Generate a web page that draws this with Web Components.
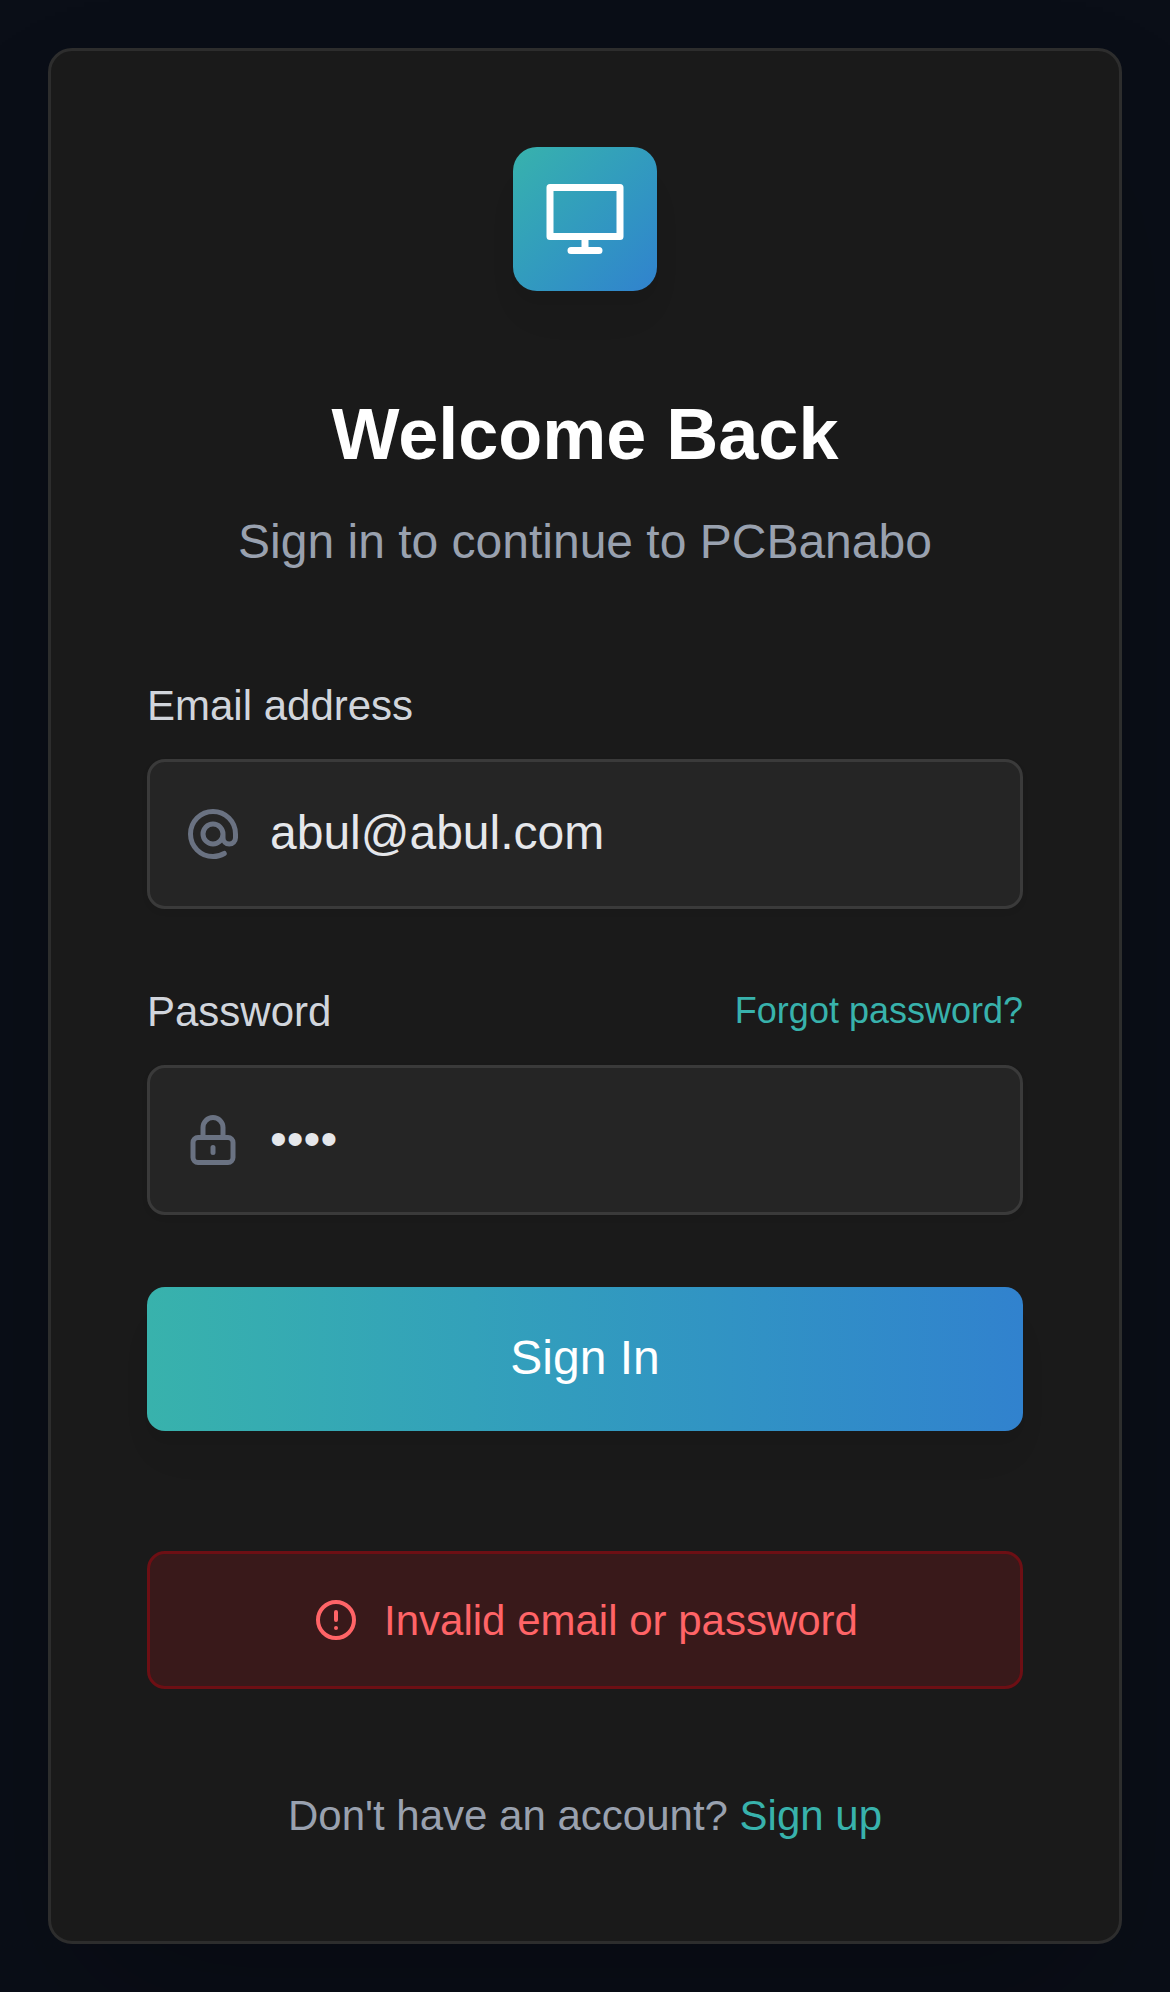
<!DOCTYPE html>
<html lang="en">
<head>
<meta charset="utf-8">
<title>PCBanabo – Sign in</title>
<style>
html, body { margin: 0; height: 100%; }
body { background: #0a0e17; font-family: "Liberation Sans", Arial, sans-serif; overflow: hidden; }
</style>
</head>
<body>
<login-page></login-page>
<script>
const define = (name, html) => customElements.define(name, class extends HTMLElement {
  constructor() {
    super();
    this.attachShadow({ mode: "open" }).innerHTML = html;
  }
});

const ICONS = {
  monitor: '<path d="M2 3h20v14H2zM12 17v4M8 21h8"/>',
  at: '<path d="M16 12a4 4 0 10-8 0 4 4 0 008 0zm0 0v1.5a2.5 2.5 0 005 0V12a9 9 0 10-9 9m4.5-1.206a8.959 8.959 0 01-4.5 1.207"/>',
  lock: '<path d="M12 15v2m-6 4h12a2 2 0 002-2v-6a2 2 0 00-2-2H6a2 2 0 00-2 2v6a2 2 0 002 2zm10-10V7a4 4 0 00-8 0v4h8z"/>',
  alert: '<path d="M12 8v4m0 4h.01M21 12a9 9 0 11-18 0 9 9 0 0118 0z"/>'
};

customElements.define("ui-icon", class extends HTMLElement {
  constructor() {
    super();
    this.attachShadow({ mode: "open" });
  }
  connectedCallback() {
    this.shadowRoot.innerHTML = `
      <style>
        :host { display: block; flex: none; width: 60px; height: 60px; }
        svg { display: block; width: 100%; height: 100%; }
      </style>
      <svg viewBox="0 0 24 24" fill="none" stroke="currentColor" stroke-width="2"
           stroke-linecap="round" stroke-linejoin="round">${ICONS[this.getAttribute("name")]}</svg>`;
  }
});

define("brand-mark", `
  <style>
    :host { display: flex; align-items: center; justify-content: center; width: 144px; height: 144px;
      border-radius: 24px; color: #fff; background: linear-gradient(to bottom right in oklab, #38b2ac, #3182ce);
      box-shadow: 0 30px 45px -9px rgba(0,0,0,.04), 0 12px 18px -12px rgba(0,0,0,.08); }
    ui-icon { width: 84px; height: 84px; }
  </style>
  <ui-icon name="monitor"></ui-icon>`);

define("form-field", `
  <style>
    :host { display: block; }
    .head { display: flex; justify-content: space-between; height: 60px; line-height: 62px;
      font-size: 42px; color: #d1d5dc; margin-bottom: 24px; }
    ::slotted([slot="action"]) { font-size: 36px; line-height: 59px; color: #38b2ac; text-decoration: none; }
    .box { box-sizing: border-box; height: 150px; display: flex; align-items: center; gap: 27px;
      padding: 0 33px; border: 3px solid #3a3a3a; border-radius: 18px; background: #252525;
      box-shadow: 0 3px 6px rgba(0,0,0,.05); color: #e5e7eb; font-size: 48px; line-height: 72px; }
    .value { padding-bottom: 2px; }
  </style>
  <div class="head"><slot name="label"></slot><slot name="action"></slot></div>
  <div class="box"><slot name="icon"></slot><span class="value"><slot></slot></span></div>`);

define("primary-button", `
  <style>
    :host { display: block; }
    button { display: block; width: 100%; height: 144px; margin: 0; padding: 0 0 2px; border: 0;
      border-radius: 18px; font: 48px/142px "Liberation Sans", Arial, sans-serif; color: #fff;
      background: linear-gradient(to right in oklab, #38b2ac, #3182ce);
      box-shadow: 0 30px 45px -9px rgba(0,0,0,.04), 0 12px 18px -12px rgba(0,0,0,.08); }
  </style>
  <button type="button"><slot></slot></button>`);

define("error-banner", `
  <style>
    :host { box-sizing: border-box; display: flex; align-items: center; justify-content: center; gap: 24px;
      height: 138px; border: 3px solid #6d0f14; border-radius: 18px; background: #39191a;
      color: #ff6467; font-size: 42px; line-height: 60px; }
    ui-icon { width: 48px; height: 48px; }
    span { padding-top: 2px; }
  </style>
  <ui-icon name="alert"></ui-icon><span><slot></slot></span>`);

define("auth-card", `
  <style>
    :host { box-sizing: border-box; display: flex; flex-direction: column; width: 1074px; height: 1896px;
      padding: 96px; border: 3px solid #2d2d2d; border-radius: 24px; background: #1a1a1a;
      box-shadow: 0 75px 150px -36px rgba(0,0,0,.25); }
    ::slotted(*) { flex-shrink: 0; }
  </style>
  <slot></slot>`);

define("login-page", `
  <style>
    :host { display: block; box-sizing: border-box; height: 1992px; padding: 48px; }
    brand-mark { align-self: center; margin-bottom: 95px; }
    h1 { margin: 0; text-align: center; font-size: 72px; line-height: 96px; color: #fff; }
    .sub { margin: 24px 0 97px; text-align: center; font-size: 48px; line-height: 72px; color: #99a1af; }
    form-field { margin-bottom: 72px; }
    .at, .lock { color: #6a7282; }
    error-banner { margin-top: 120px; }
    .foot { margin: 97px 0 0; text-align: center; font-size: 42px; line-height: 60px; color: #99a1af; }
    .foot a { color: #38b2ac; text-decoration: none; }
  </style>
  <auth-card>
    <brand-mark></brand-mark>
    <h1>Welcome Back</h1>
    <p class="sub">Sign in to continue to PCBanabo</p>
    <form-field>
      <span slot="label">Email address</span>
      <ui-icon class="at" slot="icon" name="at"></ui-icon>abul@abul.com
    </form-field>
    <form-field>
      <span slot="label">Password</span>
      <a slot="action">Forgot password?</a>
      <ui-icon class="lock" slot="icon" name="lock"></ui-icon>••••
    </form-field>
    <primary-button>Sign In</primary-button>
    <error-banner>Invalid email or password</error-banner>
    <p class="foot">Don't have an account? <a>Sign up</a></p>
  </auth-card>`);
</script>
</body>
</html>
